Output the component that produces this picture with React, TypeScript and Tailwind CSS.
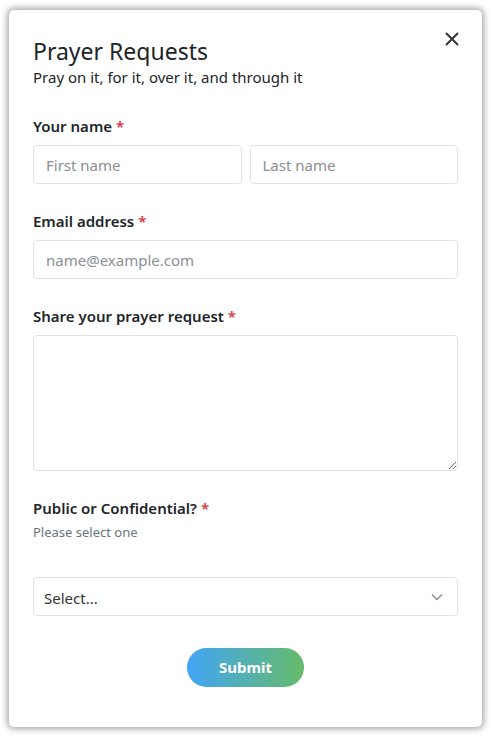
import React from "react";

const font = { fontFamily: '"Noto Sans", "Open Sans", sans-serif' };

function Label({ children }: { children: React.ReactNode }) {
  return (
    <div className="text-[15px] font-semibold text-[#212529] leading-[22px]">
      {children} <span className="text-[#dc3545]">*</span>
    </div>
  );
}

export default function App() {
  return (
    <div className="w-[492px] h-[737px] bg-white pt-[10px] pl-[9px]" style={font}>
      <div className="w-[473px] h-[717px] bg-white rounded-[5px] shadow-[0_0_6px_2px_rgba(0,0,0,0.35)] flex flex-col px-[24px] pt-[26px] relative">
        <button className="absolute right-[23px] top-[22px] text-[#333]">
          <svg width="14" height="14" viewBox="0 0 14 14" fill="none" stroke="currentColor" strokeWidth="2">
            <path d="M1 1L13 13M13 1L1 13" />
          </svg>
        </button>
        <h1 className="text-[23px] leading-[30px] text-[#212529] font-normal">Prayer Requests</h1>
        <p className="text-[15px] leading-[20px] text-[#212529] mt-[1px]">Pray on it, for it, over it, and through it</p>

        <div className="mt-[28px]">
          <Label>Your name</Label>
        </div>
        <div className="flex gap-[8px] mt-[8px]">
          <input
            placeholder="First name"
            className="flex-1 min-w-0 h-[39px] border border-[#dee2e6] rounded-[4px] px-[12px] text-[15px] placeholder:text-[#8a8f94] outline-none"
          />
          <input
            placeholder="Last name"
            className="flex-1 min-w-0 h-[39px] border border-[#dee2e6] rounded-[4px] px-[12px] text-[15px] placeholder:text-[#8a8f94] outline-none"
          />
        </div>

        <div className="mt-[26px]">
          <Label>Email address</Label>
        </div>
        <input
          placeholder="name@example.com"
          className="mt-[8px] w-full h-[39px] border border-[#dee2e6] rounded-[4px] px-[12px] text-[15px] placeholder:text-[#8a8f94] outline-none"
        />

        <div className="mt-[26px]">
          <Label>Share your prayer request</Label>
        </div>
        <textarea className="mt-[8px] w-full h-[136px] border border-[#dee2e6] rounded-[4px] px-[12px] py-[6px] text-[15px] outline-none resize-y" />

        <div className="mt-[26px]">
          <Label>Public or Confidential?</Label>
        </div>
        <div className="text-[13px] text-[#6c757d] mt-[4px] leading-[18px]">Please select one</div>

        <div className="mt-[36px] w-full h-[39px] border border-[#dee2e6] rounded-[4px] flex items-center justify-between pl-[10px] pr-[14px] pt-[4px]">
          <span className="text-[15px] text-[#333]">Select...</span>
          <svg width="12" height="8" viewBox="0 0 12 8" fill="none" stroke="#888" strokeWidth="1.3" className="-mt-[4px]">
            <path d="M1 1.5L6 6.5L11 1.5" />
          </svg>
        </div>

        <div className="flex justify-center mt-[32px]">
          <button className="w-[117px] h-[39px] rounded-full bg-[linear-gradient(90deg,#42a5f5,#66bb6a)] text-white font-bold text-[15px]">
            Submit
          </button>
        </div>
      </div>
    </div>
  );
}
